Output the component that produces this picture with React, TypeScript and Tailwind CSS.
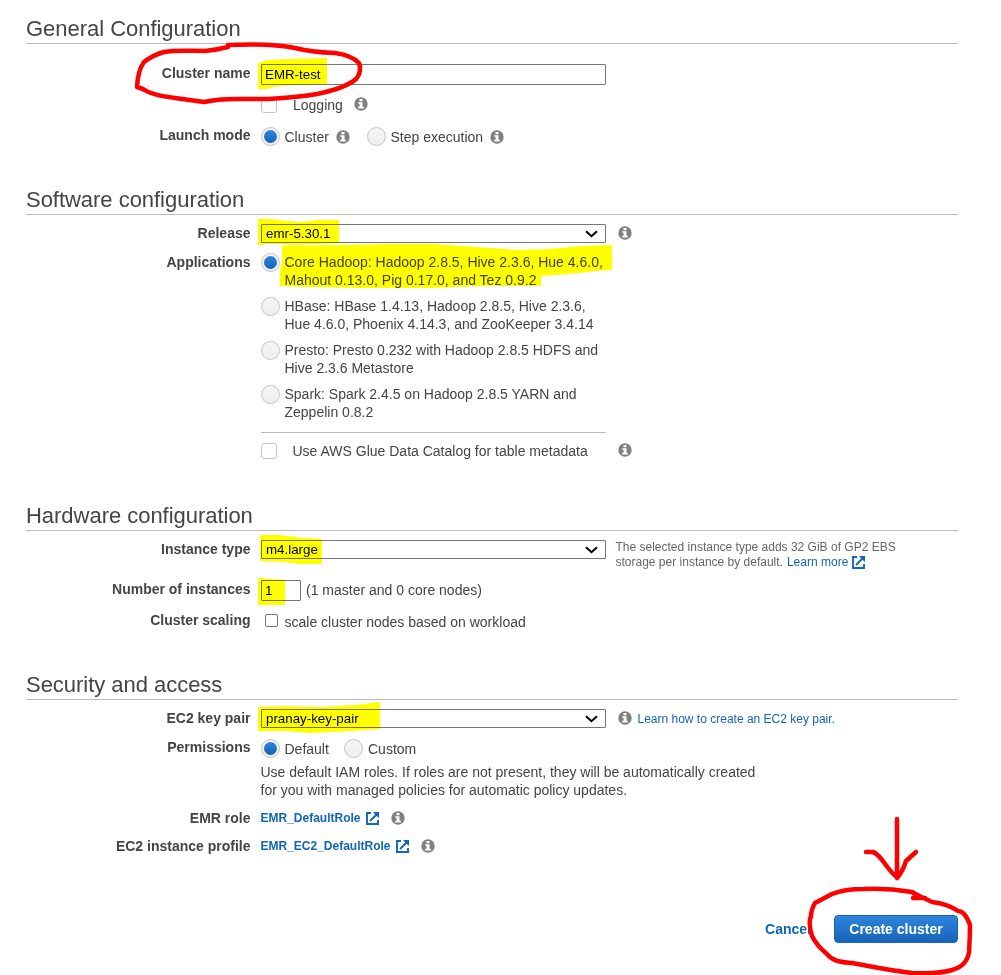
import type { ReactNode } from "react";

function Info({ className = "" }: { className?: string }) {
  return (
    <svg className={"h-[14px] w-[14px] shrink-0 " + className} viewBox="0 0 14 14">
      <circle cx="7" cy="7" r="6.7" fill="#808080" />
      <path d="M5.5 2h3v2.2h-3zM4.3 5.2h4.2v4.5h1.3v1.7H4.2V9.7h1.4V6.8H4.3z" fill="#fff" />
    </svg>
  );
}

function External() {
  return (
    <svg className="h-[13px] w-[13px] shrink-0" viewBox="0 0 13 13" fill="none" stroke="#1166bb" strokeWidth="1.9">
      <path d="M5 1H1V12H12V8" />
      <path d="M4 9L10.5 2.5" strokeWidth="2" />
      <path d="M7 0H13V6L11.3 4.4L8.6 1.7Z" fill="#1166bb" stroke="none" />
    </svg>
  );
}

function Radio({ checked = false }: { checked?: boolean }) {
  return (
    <span className="flex h-[19px] w-[19px] shrink-0 items-center justify-center rounded-full border border-[#c4c4c4] bg-linear-to-b from-[#f6f6f6] to-[#eeeeee]">
      {checked && <span className="h-[13px] w-[13px] rounded-full bg-linear-to-b from-[#2f86dc] to-[#1463b8]" />}
    </span>
  );
}

function SoftCheckbox() {
  return <span className="h-4 w-4 shrink-0 rounded-[3px] border border-[#c4c4c4] bg-white" />;
}

function Select({ value }: { value: string }) {
  return (
    <div className="flex h-[19px] w-[345px] shrink-0 items-center justify-between rounded-[1px] border border-[#767676] bg-white pr-[7px] pl-1 text-[13.33px] leading-[17px] text-black">
      <span>{value}</span>
      <svg className="h-[8px] w-[13px]" viewBox="0 0 13 8" fill="none" stroke="#000" strokeWidth="2">
        <path d="M1 1.2L6.5 6.2L12 1.2" />
      </svg>
    </div>
  );
}

function Row({ label = "", labelClass = "", className = "", children }: { label?: string; labelClass?: string; className?: string; children: ReactNode }) {
  return (
    <div className={"flex items-start " + className}>
      <div className={"w-[224.5px] shrink-0 text-right font-bold leading-[18px] whitespace-nowrap " + labelClass}>{label}</div>
      <div className="ml-[10.5px] flex-1">{children}</div>
    </div>
  );
}

function Heading({ children }: { children: ReactNode }) {
  return <h2 className="h-[28px] border-b border-[#bbbbbb] text-[22px] leading-[25px] tracking-[-0.03px] whitespace-nowrap">{children}</h2>;
}

const applications = [
  ["Core Hadoop: Hadoop 2.8.5, Hive 2.3.6, Hue 4.6.0,", "Mahout 0.13.0, Pig 0.17.0, and Tez 0.9.2"],
  ["HBase: HBase 1.4.13, Hadoop 2.8.5, Hive 2.3.6,", "Hue 4.6.0, Phoenix 4.14.3, and ZooKeeper 3.4.14"],
  ["Presto: Presto 0.232 with Hadoop 2.8.5 HDFS and", "Hive 2.3.6 Metastore"],
  ["Spark: Spark 2.4.5 on Hadoop 2.8.5 YARN and", "Zeppelin 0.8.2"],
];

function Markup() {
  return (
    <>
      <svg className="pointer-events-none absolute top-0 left-0 h-[975px] w-[1001px] mix-blend-multiply" viewBox="0 0 1001 975" fill="#ffff00">
        <path d="M258 63L267 60L290 59L327 58V84L290 85L273 87L268 89H258Z" />
        <path d="M258 219H269L300 222L319 220H339V243L297 245L270 244L258 245Z" />
        <path d="M282 246L390 244L436 244L490 248L520 250L550 249L580 246L612 245V270L595 271L580 273L541 276V286L480 286L430 288L360 288L310 287L280 286V272L282 260Z" />
        <path d="M260 535H280L303 538L322 539V564H300L284 562L260 561Z" />
        <path d="M258 578L270 579L285 580V605H258Z" />
        <path d="M258 707L285 706L320 707L355 705L380 702V729L352 731L310 733L285 731L258 731Z" />
      </svg>
      <svg className="pointer-events-none absolute top-0 left-0 h-[975px] w-[1001px]" viewBox="0 0 1001 975" fill="none" stroke="#ff0000" strokeWidth="4.5" strokeLinecap="round" strokeLinejoin="round">
        <path d="M228 47Q216 50 205 51C188 51 176 50 164 52Q153 55 144 62Q138 70 137 87L143 89Q151 95 175 98L204 102Q218 99 235 99L268 99Q300 97 317 94Q346 88 356 79Q362 72 359 63Q351 55 335 53Q310 52 295 48Q270 43 228 45Z" />
        <path d="M897 819V876M866 852H873C882 855 887 871 897 877M916 852L906 861Q903 871 897 878" />
        <path d="M925 898H913H923L912 892Q888 888 864 889Q844 889 832 894L815 903Q811 910 811 916Q808 923 812 936Q817 946 827 954C833 962 842 962 852 963L879 968Q895 971 912 973Q940 974 952 970Q967 966 969 952Q970 938 970 925Q965 911 958 911Q948 904 932 902L913 893" />
      </svg>
    </>
  );
}

export default function App() {
  return (
    <main className="relative h-[975px] w-[1001px] overflow-hidden bg-white pt-[16px] pr-[43px] pl-[26px] font-['Liberation_Sans',Arial,sans-serif] text-[14px] leading-[18px] text-[#444444]">
      <section className="h-[171px]">
        <Heading>General Configuration</Heading>
        <Row label="Cluster name" className="mt-5 h-[33px]">
          <div className="flex h-[21px] w-[345px] items-center rounded-[1px] border border-[#767676] pl-[3px] text-[13.33px] text-black">EMR-test</div>
        </Row>
        <Row className="h-[30px]">
          <div className="flex h-4 items-center">
            <SoftCheckbox />
            <span className="ml-4 w-[61px]">Logging</span>
            <Info className="-mt-[2px]" />
          </div>
        </Row>
        <Row label="Launch mode" labelClass="-mt-px">
          <div className="flex h-[19px] items-center">
            <Radio checked />
            <span className="ml-[4.5px] w-[51.5px]">Cluster</span>
            <Info />
            <span className="w-[17px]" />
            <Radio />
            <span className="ml-[4.5px] w-[99.5px]">Step execution</span>
            <Info />
          </div>
        </Row>
      </section>

      <section className="h-[316px]">
        <Heading>Software configuration</Heading>
        <Row label="Release" className="mt-[9px] h-[29px]">
          <div className="flex h-[19px] items-center">
            <Select value="emr-5.30.1" />
            <span className="w-3" />
            <Info className="-mt-px" />
          </div>
        </Row>
        <Row label="Applications">
          <div className="flex w-[345px] flex-col gap-2 border-b border-[#bbbbbb] pb-[11px] whitespace-nowrap">
            {applications.map(([first, second], i) => (
              <div key={first} className="flex gap-[4.5px]">
                <Radio checked={i === 0} />
                <p>
                  {first}
                  <br />
                  {second}
                </p>
              </div>
            ))}
          </div>
          <div className="mt-[10px] flex h-4 items-center">
            <SoftCheckbox />
            <span className="ml-[15.5px] w-[325.5px]">Use AWS Glue Data Catalog for table metadata</span>
            <Info className="-mt-[2px]" />
          </div>
        </Row>
      </section>

      <section className="h-[169px]">
        <Heading>Hardware configuration</Heading>
        <Row label="Instance type" className="mt-[9px] h-[40px]">
          <div className="flex">
            <Select value="m4.large" />
            <div className="ml-[9.5px] text-[12px] leading-[15px] whitespace-nowrap text-[#666666]">
              <p>The selected instance type adds 32 GiB of GP2 EBS</p>
              <p className="flex items-center">
                storage per instance by default.
                <a className="mr-1 ml-1 text-[#1166bb]">Learn more</a>
                <External />
              </p>
            </div>
          </div>
        </Row>
        <Row label="Number of instances" className="h-[32px]">
          <div className="flex h-[21px] items-center">
            <div className="flex h-[21px] w-10 items-center rounded-[1px] border border-[#767676] pl-[3px] text-[13.33px] text-black">1</div>
            <span className="-mt-px ml-[5px]">(1 master and 0 core nodes)</span>
          </div>
        </Row>
        <Row label="Cluster scaling" labelClass="-mt-px">
          <div className="flex h-[18px] items-center pl-1">
            <span className="-mt-[2px] h-[13px] w-[13px] rounded-[2px] border border-[#767676]" />
            <span className="mt-[2px] ml-[6.5px]">scale cluster nodes based on workload</span>
          </div>
        </Row>
      </section>

      <section className="h-[243px]">
        <Heading>Security and access</Heading>
        <Row label="EC2 key pair" className="mt-[9px] h-[30px]">
          <div className="flex h-[19px] items-center">
            <Select value="pranay-key-pair" />
            <span className="w-3" />
            <Info className="-mt-px" />
            <a className="ml-[5.5px] text-[12px] text-[#1166bb]">Learn how to create an EC2 key pair.</a>
          </div>
        </Row>
        <Row label="Permissions" labelClass="-mt-px" className="h-[70px]">
          <div className="flex h-[19px] items-center">
            <Radio checked />
            <span className="ml-[4.5px] w-[59.5px]">Default</span>
            <Radio />
            <span className="ml-[5px]">Custom</span>
          </div>
          <p className="mt-[5px] -ml-[0.5px] whitespace-nowrap">
            Use default IAM roles. If roles are not present, they will be automatically created
            <br />
            for you with managed policies for automatic policy updates.
          </p>
        </Row>
        <Row label="EMR role" className="h-[28px]">
          <div className="flex h-[18px] items-center">
            <a className="mr-[5px] -ml-[0.5px] text-[12px] font-bold text-[#1166bb]">EMR_DefaultRole</a>
            <External />
            <span className="w-3" />
            <Info />
          </div>
        </Row>
        <Row label="EC2 instance profile">
          <div className="flex h-[18px] items-center">
            <a className="mr-[5px] -ml-[0.5px] text-[12px] font-bold text-[#1166bb]">EMR_EC2_DefaultRole</a>
            <External />
            <span className="w-3" />
            <Info />
          </div>
        </Row>
      </section>

      <div className="flex h-[28px] items-center justify-end">
        <button className="mr-[23px] font-bold text-[#1166bb]">Cancel</button>
        <button className="h-[28px] w-[124px] rounded-[4px] border border-[#1463b8] bg-linear-to-b from-[#2f86dc] to-[#1463b8] font-bold text-white">Create cluster</button>
      </div>
      <Markup />
    </main>
  );
}
